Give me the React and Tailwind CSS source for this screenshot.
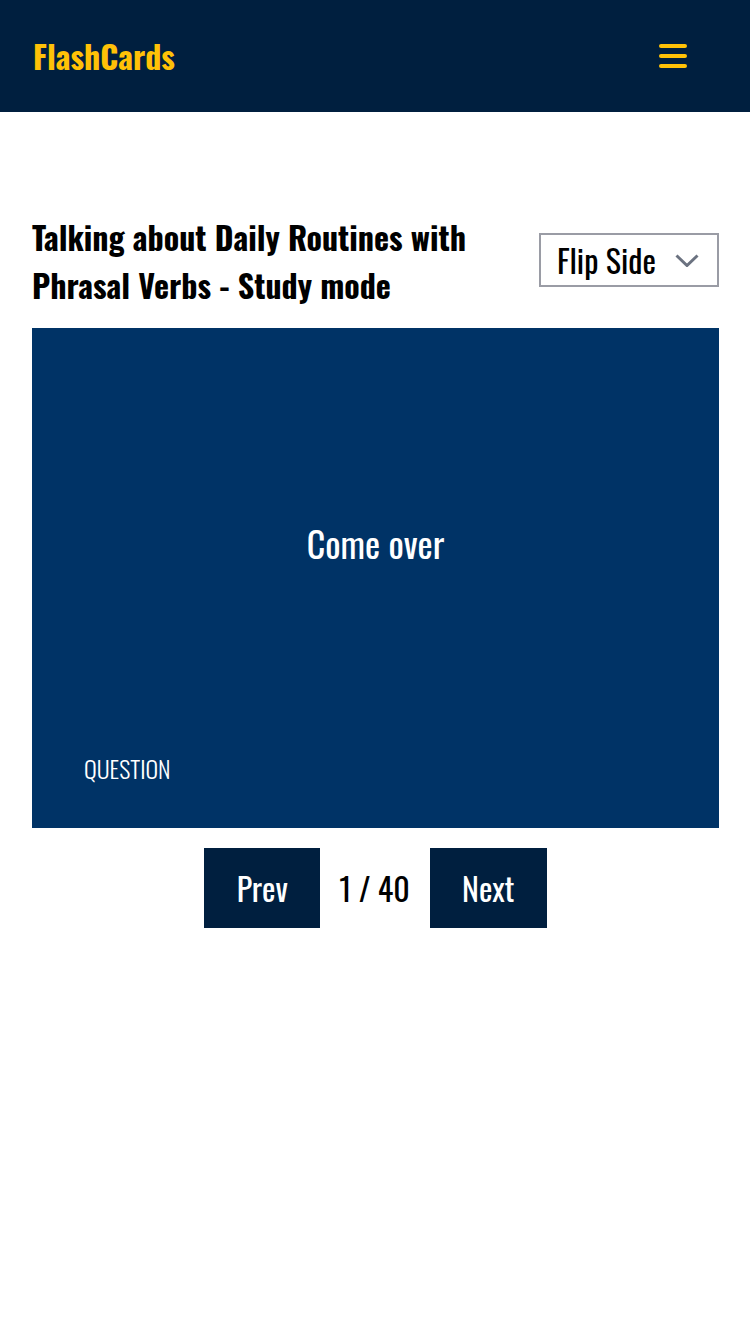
export default function App() {
  return (
    <div className="min-h-screen bg-white font-['Oswald',sans-serif]">
      <header className="h-[112px] bg-[#001f3f] flex items-center justify-between pl-[33px] pr-[63px]">
        <span className="text-[#ffc107] text-[32px] font-bold leading-none">FlashCards</span>
        <button className="flex flex-col gap-[6px] w-[28px]">
          <span className="h-[4px] w-full rounded bg-[#ffc107]" />
          <span className="h-[4px] w-full rounded bg-[#ffc107]" />
          <span className="h-[4px] w-full rounded bg-[#ffc107]" />
        </button>
      </header>

      <main className="pl-8 pr-[31px] pt-[101px]">
        <div className="flex items-start justify-between">
          <h1 className="w-[450px] text-[32px] leading-[48px] font-bold text-black">
            Talking about Daily Routines with Phrasal Verbs - Study mode
          </h1>
          <div className="mt-[20px] w-[180px] h-[54px] border-2 border-[#9a9ca5] flex items-center justify-between pl-[16px] pr-[18px]">
            <span className="text-[32px] leading-none text-black">Flip Side</span>
            <svg width="24" height="13" viewBox="0 0 24 13" fill="none">
              <path d="M1.5 1.5l10.5 10 10.5-10" stroke="#6b7280" strokeWidth="3" />
            </svg>
          </div>
        </div>

        <div className="mt-[19px] h-[500px] bg-[#003366] flex flex-col">
          <div className="flex-1 flex items-center justify-center pt-[6px]">
            <span className="text-white text-[36px]">Come over</span>
          </div>
          <div className="pl-[52px] pb-[44px] text-white text-[24px] leading-[32px] font-light">QUESTION</div>
        </div>

        <div className="mt-[20px] flex items-center justify-center">
          <button className="w-[116px] h-[80px] bg-[#001f3f] text-white text-[32px]">Prev</button>
          <span className="ml-[19px] mr-[20px] text-[32px] text-black">1 / 40</span>
          <button className="w-[117px] h-[80px] bg-[#001f3f] text-white text-[32px]">Next</button>
        </div>
      </main>
    </div>
  );
}
